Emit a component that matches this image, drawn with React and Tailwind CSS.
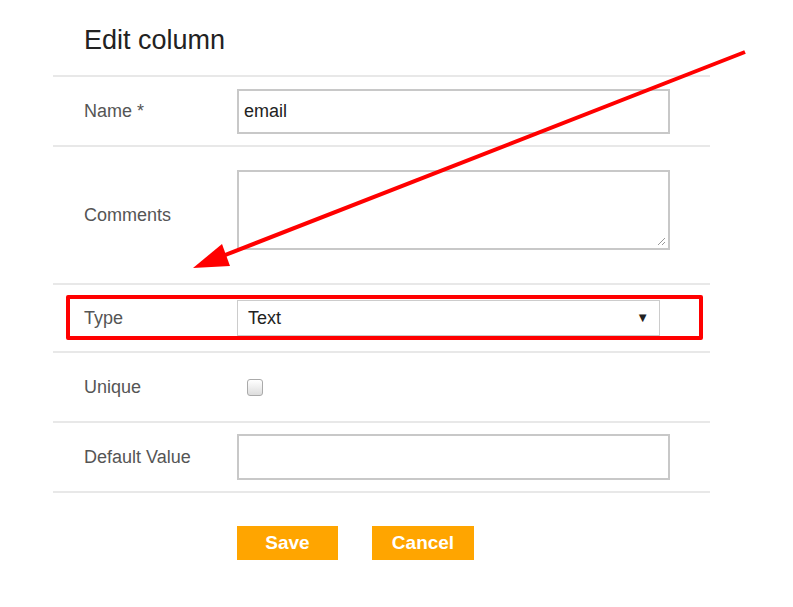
export default function App() {
  const row = "flex items-center border-t-2 border-[#e8e8e8]";
  const label = "w-[184px] pl-[31px] text-[18px] text-[#555]";
  return (
    <div className="relative w-[793px] h-[607px] bg-white" style={{ fontFamily: '"Liberation Sans", Arial, sans-serif' }}>
      <div className="ml-[53px] w-[657px]">
        <div className="h-[75px] pl-[31px] pt-[27px] text-[27px] leading-none text-[#222]">Edit column</div>
        <div className={row + " h-[70px]"}>
          <div className={label}>Name *</div>
          <div className="w-[433px] h-[45px] border-2 border-[#c8c8c8] flex items-center px-[5px] text-[18px] text-[#222]">email</div>
        </div>
        <div className={row + " h-[138px]"}>
          <div className={label}>Comments</div>
          <div className="relative w-[433px] h-[80px] border-2 border-[#c8c8c8] -mt-[11px]">
            <svg className="absolute right-[2px] bottom-[2px]" width="9" height="9" viewBox="0 0 9 9"><path d="M8 1L1 8M8 5L5 8" stroke="#999" strokeWidth="1" /></svg>
          </div>
        </div>
        <div className={row + " h-[68px]"}>
          <div className={label}>Type</div>
          <div className="w-[423px] h-[36px] border border-[#ccc] bg-white flex items-center justify-between px-[10px] text-[18px] text-[#222]">
            <span>Text</span>
            <span className="text-[13px]">▼</span>
          </div>
        </div>
        <div className={row + " h-[70px]"}>
          <div className={label}>Unique</div>
          <div className="ml-[10px] w-[16px] h-[17px] rounded-[3px] border border-[#aaa] bg-gradient-to-b from-white to-[#ddd]"></div>
        </div>
        <div className={row + " h-[70px]"}>
          <div className={label}>Default Value</div>
          <div className="w-[433px] h-[46px] border-2 border-[#c8c8c8]"></div>
        </div>
        <div className="border-t-2 border-[#e8e8e8] pl-[184px] pt-[33px] flex gap-[34px]">
          <div className="w-[101px] h-[34px] bg-[#ffa500] text-white font-bold text-[19px] flex items-center justify-center">Save</div>
          <div className="w-[102px] h-[34px] bg-[#ffa500] text-white font-bold text-[19px] flex items-center justify-center">Cancel</div>
        </div>
      </div>
      <div className="absolute left-[66px] top-[295px] w-[637px] h-[45px] border-[4px] border-[#ff0000] rounded-[2px]"></div>
      <svg className="absolute left-0 top-0" width="793" height="607">
        <line x1="745" y1="52" x2="215" y2="259" stroke="#ff0000" strokeWidth="4" />
        <polygon points="193,268 222,244 230,266" fill="#ff0000" />
      </svg>
    </div>
  );
}
